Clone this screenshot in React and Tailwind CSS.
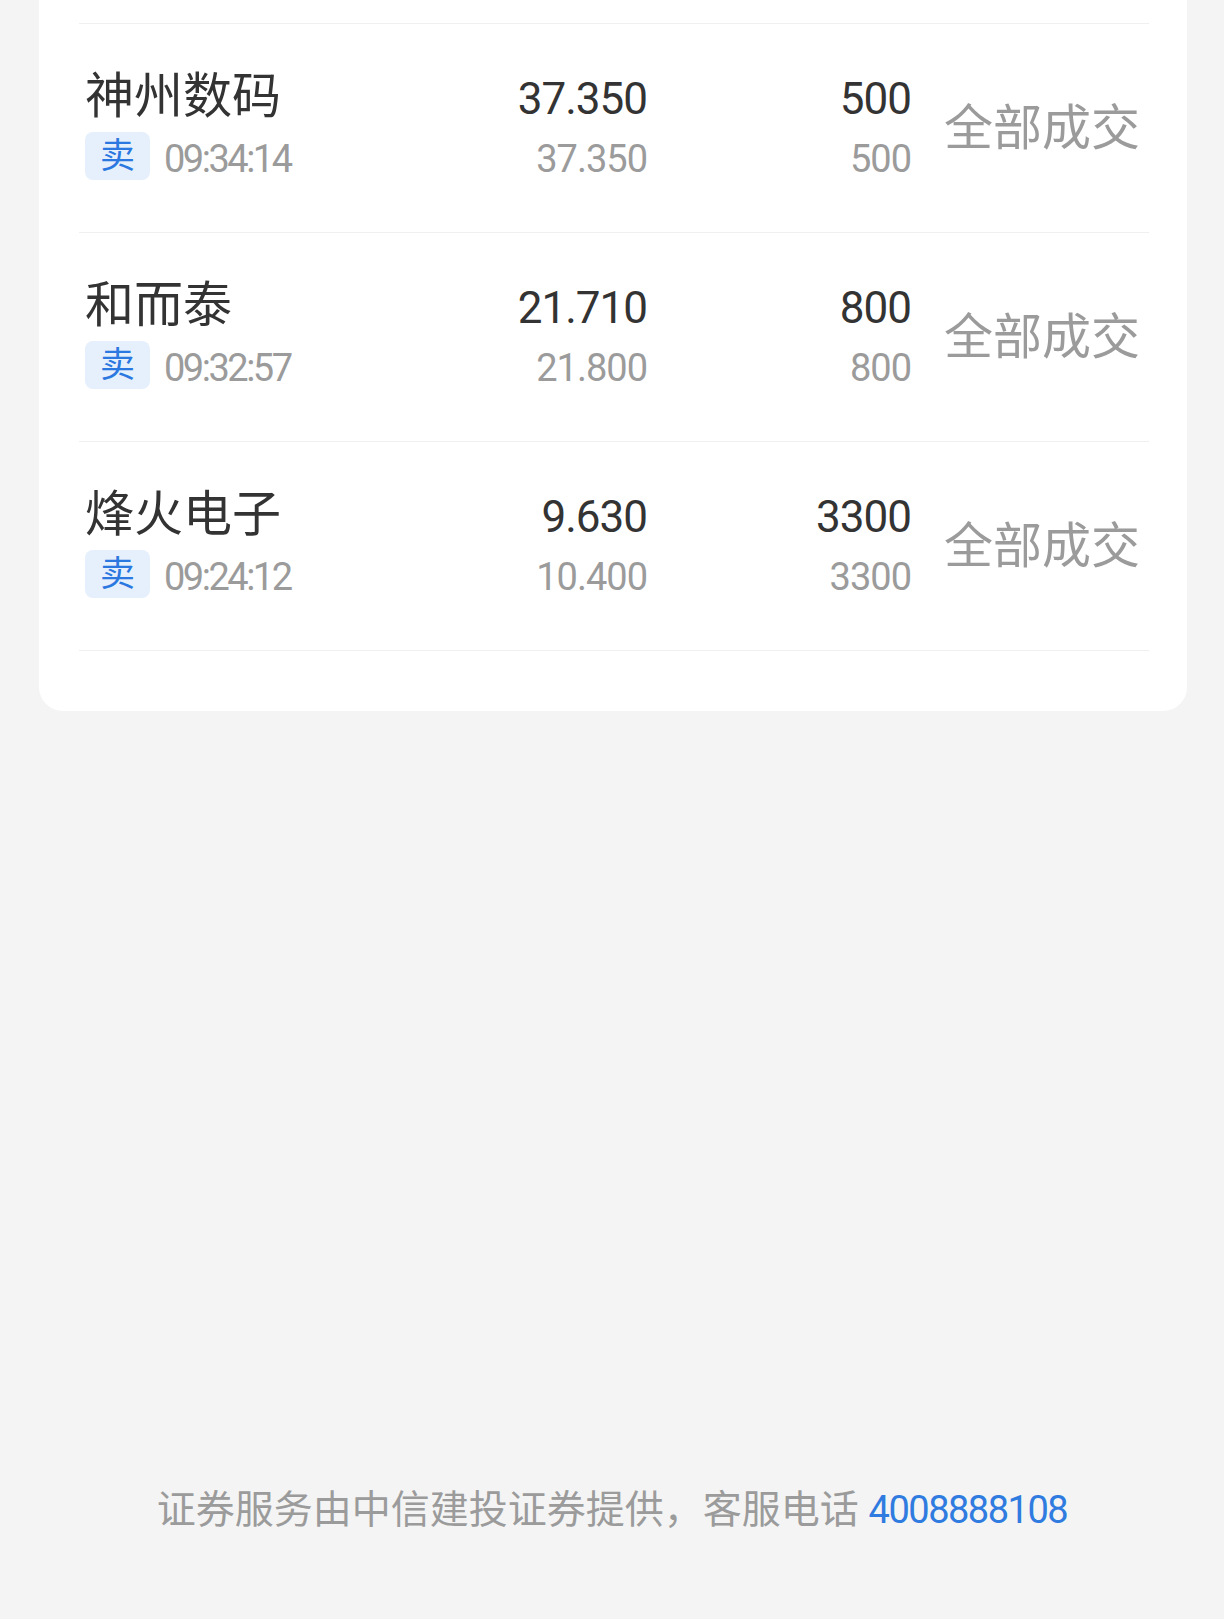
const orders = [
  { name: "神州数码", time: "09:34:14", price: "37.350", dealPrice: "37.350", qty: "500", dealQty: "500" },
  { name: "和而泰", time: "09:32:57", price: "21.710", dealPrice: "21.800", qty: "800", dealQty: "800" },
  { name: "烽火电子", time: "09:24:12", price: "9.630", dealPrice: "10.400", qty: "3300", dealQty: "3300" },
];

const font = { fontFamily: 'Roboto, "Noto Sans CJK SC", sans-serif' };

function OrderRow({ order }) {
  return (
    <div className="flex border-b border-[#f0f0f0] pl-[6px] pr-[9px] pt-[43px] pb-[52px]">
      {/* Name + side + time */}
      <div className="flex-1 min-w-0">
        <div className="h-[56px] leading-[60px] text-[49px] text-[#333333] whitespace-nowrap">{order.name}</div>
        <div className="mt-[9px] flex h-[48px] items-start">
          <span className="flex h-[48px] w-[65px] items-center justify-center rounded-[8px] bg-[#e6f0fd] text-[35px] leading-none text-[#2b78e0]">
            卖
          </span>
          <span className="ml-[14px] text-[38px] leading-[54px] tracking-[-2.5px] text-[#9b9b9b]">{order.time}</span>
        </div>
      </div>

      {/* Price */}
      <div className="w-[200px] shrink-0 pt-[4px] text-right">
        <div className="h-[56px] text-[44px] leading-[56px] tracking-[-1px] text-[#333333]">{order.price}</div>
        <div className="mt-[5px] h-[48px] text-[38px] leading-[54px] tracking-[-1px] text-[#9b9b9b]">{order.dealPrice}</div>
      </div>

      {/* Quantity */}
      <div className="w-[264px] shrink-0 pt-[4px] text-right">
        <div className="h-[56px] text-[44px] leading-[56px] tracking-[-1px] text-[#333333]">{order.qty}</div>
        <div className="mt-[5px] h-[48px] text-[38px] leading-[54px] tracking-[-1px] text-[#9b9b9b]">{order.dealQty}</div>
      </div>

      {/* Status */}
      <div className="ml-[33px] flex w-[196px] shrink-0 items-center whitespace-nowrap pt-[11px] text-[49px] leading-[56px] text-[#9b9b9b]">
        全部成交
      </div>
    </div>
  );
}

export default function App() {
  return (
    <div className="min-h-screen bg-[#f4f4f4]" style={font}>
      <div className="ml-[39px] mr-[37px] rounded-b-[24px] bg-white pl-10 pr-[38px] pb-[60px]">
        <div className="h-[24px] border-b border-[#f0f0f0]" />
        {orders.map((o) => (
          <OrderRow key={o.name} order={o} />
        ))}
      </div>

      <p className="mt-[771px] pb-[81px] text-center text-[39px] leading-[56px] text-[#9b9b9b]">
        证券服务由中信建投证券提供，客服电话{" "}
        <span className="text-[38px] tracking-[-1.5px] text-[#2f7be0]">4008888108</span>
      </p>
    </div>
  );
}
